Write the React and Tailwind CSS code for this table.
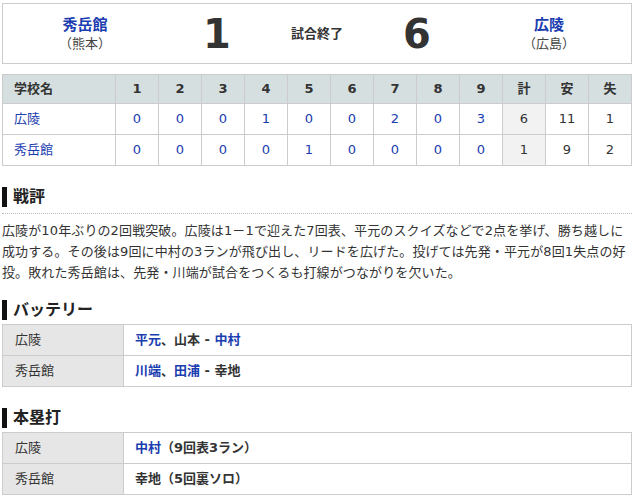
import React from 'react';

const innings = ['1', '2', '3', '4', '5', '6', '7', '8', '9'];

const lineScore = [
  { team: '広陵', runs: ['0', '0', '0', '1', '0', '0', '2', '0', '3'], total: '6', hits: '11', errors: '1' },
  { team: '秀岳館', runs: ['0', '0', '0', '0', '1', '0', '0', '0', '0'], total: '1', hits: '9', errors: '2' },
];

const font = { fontFamily: '"DejaVu Sans", "Noto Sans CJK JP", sans-serif' };

function SectionTitle({ children }) {
  return (
    <div className="flex items-center h-[20px]">
      <div className="w-[5px] h-[20px] bg-[#111]" />
      <div className="ml-[6px] text-[16px] font-bold text-[#222] leading-none">{children}</div>
    </div>
  );
}

function InfoTable({ rows }) {
  return (
    <table className="w-full border-collapse text-[13px]">
      <tbody>
        {rows.map((r) => (
          <tr key={r.team} className="h-[31px]">
            <td className="w-[121px] bg-[#e6e6e6] border border-[#ccc] pl-[12px] text-[#333]">{r.team}</td>
            <td className="border border-[#ccc] pl-[11px] font-bold text-[#333]">{r.content}</td>
          </tr>
        ))}
      </tbody>
    </table>
  );
}

const Link = ({ children }) => <span className="text-[#1a3db0]">{children}</span>;

export default function App() {
  return (
    <div className="w-[634px] bg-white text-[#333] px-[2px] pt-[3px]" style={font}>
      {/* score board */}
      <div className="flex h-[61px] border border-[#ccc] items-center">
        <div className="w-[164px] flex flex-col items-center">
          <div className="text-[15px] font-bold text-[#1a3db0] leading-[20px]">秀岳館</div>
          <div className="text-[13px] text-[#444] leading-[18px]">（熊本）</div>
        </div>
        <div className="w-[100px] text-center text-[40px] font-bold text-[#333] leading-none">1</div>
        <div className="w-[100px] text-center text-[13px] font-bold text-[#333]">試合終了</div>
        <div className="w-[100px] text-center text-[40px] font-bold text-[#333] leading-none">6</div>
        <div className="flex-1 flex flex-col items-center">
          <div className="text-[15px] font-bold text-[#1a3db0] leading-[20px]">広陵</div>
          <div className="text-[13px] text-[#444] leading-[18px]">（広島）</div>
        </div>
      </div>

      {/* line score */}
      <table className="w-full mt-[10px] border-collapse text-[13px] table-fixed">
        <thead>
          <tr className="h-[29px] bg-[#d5dfe0]">
            <th className="w-[113px] border border-[#ccc] text-left pl-[11px] font-bold">学校名</th>
            {innings.map((n) => (
              <th key={n} className="border border-[#ccc] font-bold">{n}</th>
            ))}
            <th className="border border-[#ccc] font-bold">計</th>
            <th className="border border-[#ccc] font-bold">安</th>
            <th className="border border-[#ccc] font-bold">失</th>
          </tr>
        </thead>
        <tbody>
          {lineScore.map((r) => (
            <tr key={r.team} className="h-[31px]">
              <td className="border border-[#ccc] pl-[11px] text-[#1a3db0]">{r.team}</td>
              {r.runs.map((v, i) => (
                <td key={i} className="border border-[#ccc] text-center text-[#1a3db0]">{v}</td>
              ))}
              <td className="border border-[#ccc] text-center bg-[#f2f2f2]">{r.total}</td>
              <td className="border border-[#ccc] text-center">{r.hits}</td>
              <td className="border border-[#ccc] text-center">{r.errors}</td>
            </tr>
          ))}
        </tbody>
      </table>

      {/* 戦評 */}
      <div className="mt-[21px]">
        <SectionTitle>戦評</SectionTitle>
      </div>
      <div className="mt-[6px] border-t border-dotted border-[#bbb]" />
      <p className="mt-[6px] text-[13px] leading-[21px] tracking-[0.12px] text-[#333]">
        広陵が10年ぶりの2回戦突破。広陵は1－1で迎えた7回表、平元のスクイズなどで2点を挙げ、勝ち越しに成功する。その後は9回に中村の3ランが飛び出し、リードを広げた。投げては先発・平元が8回1失点の好投。敗れた秀岳館は、先発・川端が試合をつくるも打線がつながりを欠いた。
      </p>

      {/* バッテリー */}
      <div className="mt-[17px]">
        <SectionTitle>バッテリー</SectionTitle>
      </div>
      <div className="mt-[4px]">
        <InfoTable
          rows={[
            { team: '広陵', content: <><Link>平元</Link>、山本 - <Link>中村</Link></> },
            { team: '秀岳館', content: <><Link>川端</Link>、<Link>田浦</Link> - 幸地</> },
          ]}
        />
      </div>

      {/* 本塁打 */}
      <div className="mt-[21px]">
        <SectionTitle>本塁打</SectionTitle>
      </div>
      <div className="mt-[4px]">
        <InfoTable
          rows={[
            { team: '広陵', content: <><Link>中村</Link>（9回表3ラン）</> },
            { team: '秀岳館', content: <>幸地（5回裏ソロ）</> },
          ]}
        />
      </div>
    </div>
  );
}
